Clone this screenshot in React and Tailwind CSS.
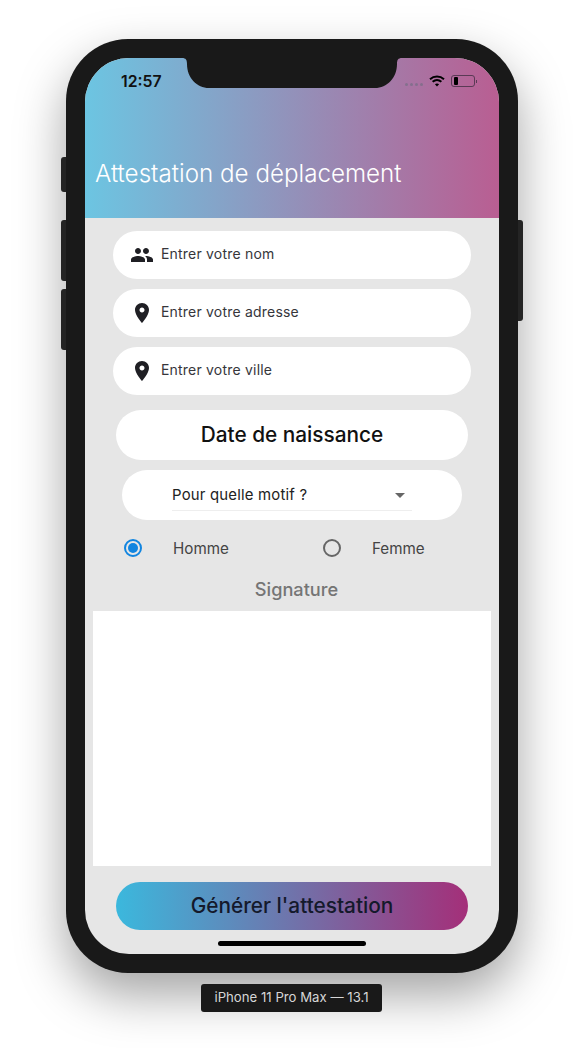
import React from "react";

const font = { fontFamily: "Inter, 'Noto Sans', sans-serif" };

function People() {
  return (
    <svg width="24" height="24" viewBox="0 0 24 24" fill="#1f1f24" className="shrink-0">
      <path d="M16 11c1.66 0 2.99-1.34 2.99-3S17.66 5 16 5s-3 1.34-3 3 1.34 3 3 3zm-8 0c1.66 0 2.99-1.34 2.99-3S9.66 5 8 5 5 6.34 5 8s1.34 3 3 3zm0 2c-2.33 0-7 1.17-7 3.5V19h14v-2.5C15 14.17 10.33 13 8 13zm8 0c-.29 0-.62.02-.97.05 1.16.84 1.97 1.97 1.97 3.45V19h6v-2.5c0-2.33-4.67-3.5-7-3.5z" />
    </svg>
  );
}

function Pin() {
  return (
    <svg width="24" height="24" viewBox="0 0 24 24" fill="#1f1f24" className="shrink-0">
      <path d="M12 2C8.13 2 5 5.13 5 9c0 5.25 7 13 7 13s7-7.75 7-13c0-3.87-3.13-7-7-7zm0 9.5c-1.38 0-2.5-1.12-2.5-2.5s1.12-2.5 2.5-2.5 2.5 1.12 2.5 2.5-1.12 2.5-2.5 2.5z" />
    </svg>
  );
}

function Field({ icon, label, className }) {
  return (
    <div className={`flex h-12 w-[358px] items-center gap-[7px] rounded-3xl bg-white pl-[17px] ${className}`}>
      {icon}
      <span className="text-[14px] leading-none tracking-[0.2px] text-[#36363b] -translate-y-px">{label}</span>
    </div>
  );
}

function Radio({ checked, label, className }) {
  return (
    <div className={`flex items-center ${className}`}>
      <span
        className={`flex h-[18px] w-[18px] items-center justify-center rounded-full border-2 ${
          checked ? "border-[#1185e0]" : "border-[#666666]"
        }`}
      >
        {checked && <span className="h-[10px] w-[10px] rounded-full bg-[#1185e0]" />}
      </span>
      <span className="ml-[31px] pt-px text-[15.2px] leading-none text-[#444444]">{label}</span>
    </div>
  );
}

export default function App() {
  return (
    <div className="h-[1048px] w-[584px] overflow-hidden bg-white pl-[66px] pt-[39px]" style={font}>
      <div className="relative h-[934px] w-[452px] rounded-[62px] bg-[#191919] p-[19px] shadow-[0_22px_50px_rgba(0,0,0,0.36)]">
        <span className="absolute left-[-5px] top-[118px] h-[35px] w-[5px] rounded-l-[3px] bg-[#242424]" />
        <span className="absolute left-[-5px] top-[181px] h-[61px] w-[5px] rounded-l-[3px] bg-[#242424]" />
        <span className="absolute left-[-5px] top-[250px] h-[61px] w-[5px] rounded-l-[3px] bg-[#242424]" />
        <span className="absolute right-[-5px] top-[181px] h-[101px] w-[5px] rounded-r-[3px] bg-[#242424]" />

        <div className="relative flex h-[896px] w-[414px] flex-col items-center overflow-hidden rounded-[44px] bg-[#e6e6e6]">
          <svg className="absolute left-[97px] top-0 z-10" width="220" height="30" viewBox="0 0 220 30" fill="#191919">
            <path d="M0 0H220C216 0 215 2 215 6C215 20 205 30 193 30H27C15 30 5 20 5 6C5 2 4 0 0 0Z" />
          </svg>

          <header className="h-40 w-full self-stretch bg-linear-to-r/srgb from-[#6cc5e2] to-[#b95e92]">
            <div className="flex h-[46px] items-center justify-between pl-[36px] pr-[22px]">
              <span className="pt-px text-[15.8px] font-semibold leading-none text-[#111111]">12:57</span>
              <div className="flex items-center gap-[6px]">
                <div className="mt-[6px] flex gap-[2px] opacity-60">
                  <span className="h-[3px] w-[3px] rounded-full bg-[#6d6d80]" />
                  <span className="h-[3px] w-[3px] rounded-full bg-[#6d6d80]" />
                  <span className="h-[3px] w-[3px] rounded-full bg-[#6d6d80]" />
                  <span className="h-[3px] w-[3px] rounded-full bg-[#6d6d80]" />
                </div>
                <svg width="16" height="12" viewBox="0 0 16 12" fill="none" stroke="#000" strokeWidth="2">
                  <path d="M1 4.2C5 .6 11 .6 15 4.2" />
                  <path d="M3.6 6.8c2.6-2.2 6.2-2.2 8.8 0" />
                  <path d="M8 11.5 5.9 9.3c1.2-1 3-1 4.2 0z" fill="#000" stroke="none" />
                </svg>
                <div className="flex items-center">
                  <span className="flex h-[12px] w-[24px] items-center rounded-[3px] border border-[#5a3a55] pl-[2px]">
                    <span className="h-[8px] w-[4px] rounded-[1px] bg-black" />
                  </span>
                  <span className="ml-px h-[3px] w-px bg-[#5a3a55]" />
                </div>
              </div>
            </div>
            <h1 className="ml-[10px] mt-[52px] text-[24.2px] font-[350] leading-[36px] text-white">
              Attestation de déplacement
            </h1>
          </header>

          <Field className="mt-[13px]" icon={<People />} label="Entrer votre nom" />
          <Field className="mt-[10px]" icon={<Pin />} label="Entrer votre adresse" />
          <Field className="mt-[10px]" icon={<Pin />} label="Entrer votre ville" />

          <div className="mt-[15px] flex h-[50px] w-[352px] items-center justify-center rounded-[25px] bg-white pt-px text-[20.8px] font-medium leading-none text-[#111111]">
            Date de naissance
          </div>

          <div className="mt-[10px] flex h-[50px] w-[340px] justify-center rounded-[25px] bg-white">
            <div className="flex h-[41px] w-[240px] items-center justify-between border-b border-[#eeeeee] pr-[7px] pt-[10px]">
              <span className="text-[14.9px] leading-none tracking-[0.2px] text-[#222222]">Pour quelle motif ?</span>
              <span className="h-0 w-0 border-x-[5px] border-t-[5px] border-x-transparent border-t-[#666666]" />
            </div>
          </div>

          <div className="mt-[19px] flex h-[18px] w-full items-center pl-[39px]">
            <Radio checked label="Homme" className="w-[199px]" />
            <Radio label="Femme" />
          </div>

          <div className="ml-[9px] mt-[20px] flex h-[24px] items-center pt-px text-[18.2px] font-medium leading-none text-[#757575]">
            Signature
          </div>

          <div className="mt-[10px] h-[255px] w-[398px] bg-white" />

          <button className="mt-[16px] flex h-12 w-[352px] items-center justify-center rounded-3xl bg-linear-to-r/srgb from-[#3bb8dd] to-[#a42f79] pt-px text-[20.8px] font-medium leading-none text-[#14192b]">
            Générer l'attestation
          </button>

          <div className="mt-[11px] h-[5px] w-[148px] rounded-full bg-black" />
        </div>

        <div className="absolute left-[135px] top-[945px] flex h-[28px] w-[181px] items-center justify-center rounded-[3px] bg-[#191919] text-[13.2px] leading-none text-[#d6d6d6]">
          iPhone 11 Pro Max — 13.1
        </div>
      </div>
    </div>
  );
}
